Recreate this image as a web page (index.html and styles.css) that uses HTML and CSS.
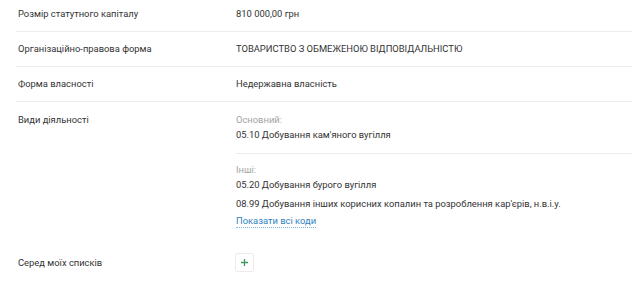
FILE: index.html
```html
<!DOCTYPE html>
<html lang="uk">
<head>
<meta charset="utf-8">
<link rel="stylesheet" href="styles.css">
</head>
<body>
<div class="table">
  <div class="row row-first">
    <div class="label">Розмір статутного капіталу</div>
    <div class="value">810 000,00 грн</div>
  </div>
  <div class="row">
    <div class="label">Організаційно-правова форма</div>
    <div class="value">ТОВАРИСТВО З ОБМЕЖЕНОЮ ВІДПОВІДАЛЬНІСТЮ</div>
  </div>
  <div class="row">
    <div class="label">Форма власності</div>
    <div class="value">Недержавна власність</div>
  </div>
  <div class="row row-plain row-acts">
    <div class="label">Види діяльності</div>
    <div class="value">
      <div class="group group-main">
        <div class="muted">Основний:</div>
        <div class="code">05.10 Добування кам'яного вугілля</div>
      </div>
      <div class="group">
        <div class="muted">Інші:</div>
        <div class="code">05.20 Добування бурого вугілля</div>
        <div class="code code-gap">08.99 Добування інших корисних копалин та розроблення кар'єрів, н.в.і.у.</div>
        <a class="more" href="#">Показати всі коди</a>
      </div>
    </div>
  </div>
  <div class="row row-plain row-lists">
    <div class="label">Серед моїх списків</div>
    <div class="value">
      <button class="add" type="button" aria-label="Додати">
        <svg width="7" height="7" viewBox="0 0 7 7"><path d="M3.5 0v7M0 3.5h7" stroke="#3e9d5c" stroke-width="1.3" fill="none"/></svg>
      </button>
    </div>
  </div>
</div>
</body>
</html>
```
FILE: styles.css
```css
html, body { margin: 0; padding: 0; background: #fff; }
body {
  font-family: Roboto, "Noto Sans", sans-serif;
  font-size: 9.4px;
  color: #333;
}
.table { margin: 0 8px 0 16px; }
.row {
  display: grid;
  grid-template-columns: 218px 1fr;
  border-bottom: 1px solid #ececec;
  padding: 10px 0 11px 2px;
  line-height: 13px;
}
.row-first { padding-top: 7px; }
.row-plain { border-bottom: none; }
.row-acts { padding-top: 11px; padding-bottom: 0; }
.group-main {
  border-bottom: 1px solid #ececec;
  padding-bottom: 12px;
  margin-bottom: 9px;
}
.muted { color: #a3a3a3; margin-bottom: 2px; }
.code-gap { margin-top: 6px; }
.more {
  display: inline-block;
  margin-top: 4px;
  color: #2f7fc1;
  text-decoration: none;
  border-bottom: 1px dotted #7fb0da;
}
.row-lists {
  padding-top: 25px;
  padding-bottom: 0;
  align-items: center;
}
.row-lists .value { display: flex; margin-left: -1px; }
.add {
  width: 19px;
  height: 19px;
  padding: 0;
  border: 1px solid #f1e8ec;
  background: #fff;
  border-radius: 2px;
  display: flex;
  align-items: center;
  justify-content: center;
}
.add svg { display: block; }
```
